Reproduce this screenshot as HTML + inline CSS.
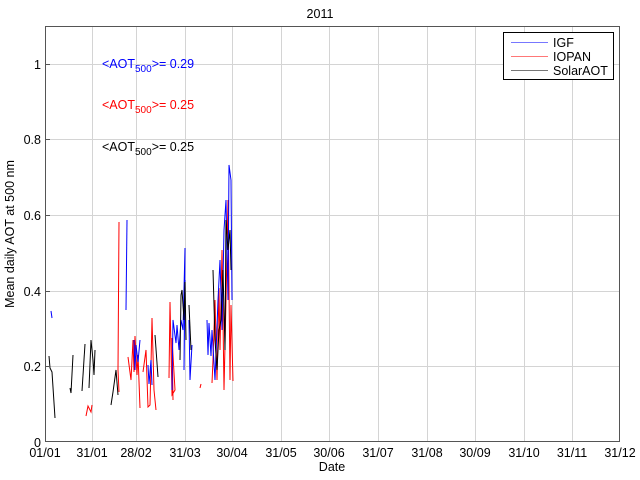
<!DOCTYPE html>
<html><head><style>
html,body{margin:0;padding:0;background:#fff;width:640px;height:480px;overflow:hidden}
svg text{font-family:"Liberation Sans",sans-serif;font-size:12.5px}
</style></head><body>
<svg width="640" height="480" xmlns="http://www.w3.org/2000/svg">
<rect width="640" height="480" fill="#fff"/>
<g stroke="#d4d4d4" stroke-width="1">
<line x1="92.5" y1="26" x2="92.5" y2="442"/><line x1="136.5" y1="26" x2="136.5" y2="442"/>
<line x1="185.5" y1="26" x2="185.5" y2="442"/><line x1="232.5" y1="26" x2="232.5" y2="442"/>
<line x1="281.5" y1="26" x2="281.5" y2="442"/><line x1="329.5" y1="26" x2="329.5" y2="442"/>
<line x1="378.5" y1="26" x2="378.5" y2="442"/><line x1="427.5" y1="26" x2="427.5" y2="442"/>
<line x1="475.5" y1="26" x2="475.5" y2="442"/><line x1="524.5" y1="26" x2="524.5" y2="442"/>
<line x1="572.5" y1="26" x2="572.5" y2="442"/>
<line x1="45" y1="366.5" x2="620" y2="366.5"/><line x1="45" y1="291.5" x2="620" y2="291.5"/>
<line x1="45" y1="215.5" x2="620" y2="215.5"/><line x1="45" y1="139.5" x2="620" y2="139.5"/>
<line x1="45" y1="64.5" x2="620" y2="64.5"/>
</g>
<g fill="none" stroke-width="1">
<polyline stroke="#f00" points="119,392 118,370 119,222"/>
<polyline stroke="#f00" points="128,357 131,380 133,340 134,372 135,336 137,375 138,355 140,408"/>
<polyline stroke="#f00" points="143,372 146,350 148,407 150,405 151,365 152,318 154,390 156,410"/>
<polyline stroke="#f00" points="169,378 170,302 172,395 175,390 172,338 173,400"/>
<polyline stroke="#f00" points="86,416 88,406 91,412 92,405"/>
<polyline stroke="#f00" points="200,388 201,384"/>
<polyline stroke="#f00" points="212,383 213,360 215,300 217,380 219,288 220,350 222,250 224,390 226,300 228,200 230,380 231,305 233,381"/>
<polyline stroke="#00f" points="126,310 127,220"/>
<polyline stroke="#00f" points="134,340 135,370 136,345 138,362 140,340"/>
<polyline stroke="#00f" points="148,365 149,384 151,360 152,385"/>
<polyline stroke="#00f" points="172,390 173,320 176,343 177,325 179,350 181,320 183,330 185,248 184,370 185,280"/>
<polyline stroke="#00f" points="189,320 190,380 192,345"/>
<polyline stroke="#00f" points="207,320 208,355 209,323 211,356 212,330 215,380 218,300 220,260 222,330 224,230 226,200 228,300 229,165 231,180 232,300"/>
<polyline stroke="#00f" points="51,311 52,318"/>
<polyline stroke="#000" points="49,356 50,368 52,372 55,418"/>
<polyline stroke="#000" points="70,388 71,393 73,355"/>
<polyline stroke="#000" points="82,391 85,344"/>
<polyline stroke="#000" points="89,388 91,340 93,360 94,375 95,350"/>
<polyline stroke="#000" points="111,405 113,392 116,370 118,395"/>
<polyline stroke="#000" points="155,335 158,377"/>
<polyline stroke="#000" points="180,360 181,295 182,290 184,320 185,282 186,340"/>
<polyline stroke="#000" points="189,305 191,350"/>
<polyline stroke="#000" points="213,270 215,340 217,370 219,330 221,320 223,270 225,350 226,220 228,250 230,230 231,270"/>
</g>
<text x="320" y="18" text-anchor="middle" font-size="11">2011</text>
<rect x="45.5" y="26.5" width="574" height="415" fill="none" stroke="#555"/>
<g stroke="#555"><line x1="45" y1="64.5" x2="50" y2="64.5"/><line x1="45" y1="139.5" x2="50" y2="139.5"/><line x1="45" y1="215.5" x2="50" y2="215.5"/><line x1="45" y1="291.5" x2="50" y2="291.5"/><line x1="45" y1="366.5" x2="50" y2="366.5"/></g>
<g text-anchor="end">
<text x="41" y="447">0</text><text x="41" y="371">0.2</text><text x="41" y="296">0.4</text>
<text x="41" y="220">0.6</text><text x="41" y="144">0.8</text><text x="41" y="69">1</text>
</g>
<g text-anchor="middle">
<text x="45" y="457">01/01</text><text x="92" y="457">31/01</text><text x="136" y="457">28/02</text>
<text x="185" y="457">31/03</text><text x="232" y="457">30/04</text><text x="281" y="457">31/05</text>
<text x="329" y="457">30/06</text><text x="378" y="457">31/07</text><text x="427" y="457">31/08</text>
<text x="475" y="457">30/09</text><text x="524" y="457">31/10</text><text x="572" y="457">31/11</text>
<text x="620" y="457">31/12</text>
<text x="332" y="471">Date</text>
</g>
<text transform="translate(14,234) rotate(-90)" text-anchor="middle">Mean daily AOT at 500 nm</text>
<text x="102" y="68" fill="#00f">&lt;AOT<tspan dy="4" font-size="10">500</tspan><tspan dy="-4">&gt;= 0.29</tspan></text>
<text x="102" y="109" fill="#f00">&lt;AOT<tspan dy="4" font-size="10">500</tspan><tspan dy="-4">&gt;= 0.25</tspan></text>
<text x="102" y="151" fill="#000">&lt;AOT<tspan dy="4" font-size="10">500</tspan><tspan dy="-4">&gt;= 0.25</tspan></text>
<rect x="503.5" y="32.5" width="110" height="47" fill="#fff" stroke="#000"/>
<line x1="511" y1="42.5" x2="548" y2="42.5" stroke="#7777ff"/>
<line x1="511" y1="56.5" x2="548" y2="56.5" stroke="#ff7777"/>
<line x1="511" y1="70.5" x2="548" y2="70.5" stroke="#777"/>
<text x="553" y="47">IGF</text><text x="553" y="61">IOPAN</text><text x="553" y="75">SolarAOT</text>
</svg>
</body></html>
